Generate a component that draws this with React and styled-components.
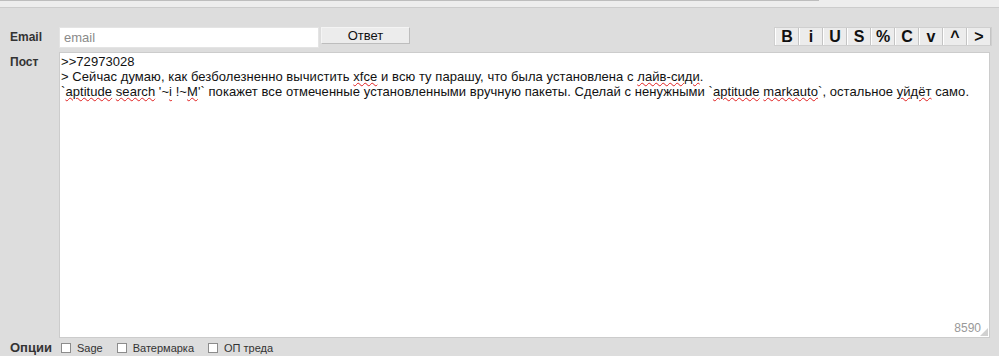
import React from "react";
import styled, { createGlobalStyle } from "styled-components";

const Global = createGlobalStyle`
  html, body {
    margin: 0;
    padding: 0;
    background: #dddddd;
    font-family: "Liberation Sans", Arial, sans-serif;
    overflow: hidden;
  }
`;

const buttons = ["B", "i", "U", "S", "%", "C", "v", "^", ">"];

export default function App() {
  return (
    <>
      <Global />
      <TopStrip>
        <TopLine />
      </TopStrip>
      <Form>
        <Label>Email</Label>
        <EmailRow>
          <Input placeholder="email" />
          <SubmitButton>Ответ</SubmitButton>
          <Spacer />
          <Markup>
            {buttons.map((b) => (
              <MarkButton key={b}>{b}</MarkButton>
            ))}
          </Markup>
        </EmailRow>

        <Label $top={3}>Пост</Label>
        <PostBox>
          <PostText>
            {">>72973028\n> Сейчас думаю, как безболезненно вычистить "}
            <Typo>xfce</Typo>
            {" и всю ту парашу, что была установлена с "}
            <Typo>лайв-сиди</Typo>
            {".\n`"}
            <Typo>aptitude</Typo> <Typo>search</Typo>
            {" '~"}
            <Typo>i</Typo>
            {" !~"}
            <Typo>M</Typo>
            {"'` покажет все отмеченные установленными вручную пакеты. Сделай с ненужными `"}
            <Typo>aptitude</Typo> <Typo>markauto</Typo>
            {"`, остальное "}
            <Typo>уйдёт</Typo>
            {" само."}
          </PostText>
          <Counter>8590</Counter>
          <Grip />
        </PostBox>

        <Label $bold>Опции</Label>
        <Options>
          <Option>
            <Check />
            Sage
          </Option>
          <Option>
            <Check />
            Ватермарка
          </Option>
          <Option>
            <Check />
            ОП треда
          </Option>
        </Options>
      </Form>
    </>
  );
}

const TopStrip = styled.div`
  height: 7px;
  background: #ededed;
  border-bottom: 1px solid #cccccc;
`;

const TopLine = styled.div`
  width: 819px;
  height: 1px;
  background: #bdbdbd;
`;

const Form = styled.div`
  display: grid;
  grid-template-columns: 59px 1fr;
  grid-template-rows: auto auto auto;
  padding: 19px 9px 0 0;
`;

const Label = styled.div`
  padding-left: 10px;
  padding-top: ${(p) => p.$top ?? 3}px;
  font-size: 12px;
  font-weight: bold;
  color: #333333;
  ${(p) => p.$bold && "font-size: 13px; padding-top: 2px;"}
`;

const EmailRow = styled.div`
  display: flex;
  align-items: flex-start;
  height: 21px;
  margin-bottom: 4px;
`;

const Input = styled.input`
  box-sizing: border-box;
  width: 260px;
  height: 21px;
  margin: 0;
  padding: 0 4px;
  border: 1px solid #e4e4e4;
  background: #ffffff;
  font-family: "Liberation Sans", Arial, sans-serif;
  font-size: 13px;
  outline: none;
  &::placeholder {
    color: #8a8a8a;
  }
`;

const SubmitButton = styled.button`
  box-sizing: border-box;
  width: 89px;
  height: 17px;
  margin: 0 0 0 2px;
  padding: 0;
  border: 1px solid #bdbdbd;
  border-top-color: #f4f4f4;
  border-left-color: #f4f4f4;
  background: #ececec;
  font-family: "Liberation Sans", Arial, sans-serif;
  font-size: 13px;
  line-height: 14px;
  color: #111111;
`;

const Spacer = styled.div`
  flex: 1;
`;

const Markup = styled.div`
  display: flex;
  border: 1px solid #cfcfcf;
  margin-right: -2px;
  margin-left: -2px;
`;

const MarkButton = styled.div`
  box-sizing: border-box;
  width: 24px;
  height: 17px;
  display: flex;
  align-items: center;
  justify-content: center;
  background: #ececec;
  border-left: 1px solid #ffffff;
  border-right: 1px solid #c4c4c4;
  font-family: "Liberation Sans", Arial, sans-serif;
  font-size: 16px;
  font-weight: bold;
  color: #111111;
`;

const PostBox = styled.div`
  position: relative;
  box-sizing: border-box;
  height: 286px;
  background: #ffffff;
  border: 1px solid #cccccc;
`;

const PostText = styled.div`
  padding: 1px 0 0 1px;
  font-size: 13px;
  line-height: 15px;
  letter-spacing: 0.06px;
  color: #111111;
  white-space: pre-wrap;
`;

const Typo = styled.span`
  text-decoration: underline wavy #e02020;
  text-decoration-thickness: 1px;
  text-underline-offset: 1px;
`;

const Counter = styled.div`
  position: absolute;
  right: 8px;
  bottom: 2px;
  font-size: 12px;
  color: #999999;
`;

const Grip = styled.div`
  position: absolute;
  right: 1px;
  bottom: 1px;
  width: 8px;
  height: 8px;
  background-image: radial-gradient(#9a9a9a 0.6px, transparent 0.8px);
  background-size: 2px 2px;
  clip-path: polygon(100% 0, 100% 100%, 0 100%);
`;

const Options = styled.div`
  display: flex;
  align-items: center;
  height: 19px;
`;

const Option = styled.label`
  display: flex;
  align-items: center;
  margin-right: 12px;
  margin-left: 2px;
  font-size: 11px;
  color: #333333;
`;

const Check = styled.span`
  box-sizing: border-box;
  width: 10px;
  height: 10px;
  margin-right: 6px;
  border: 1px solid #8c8c8c;
  background: #ffffff;
`;
